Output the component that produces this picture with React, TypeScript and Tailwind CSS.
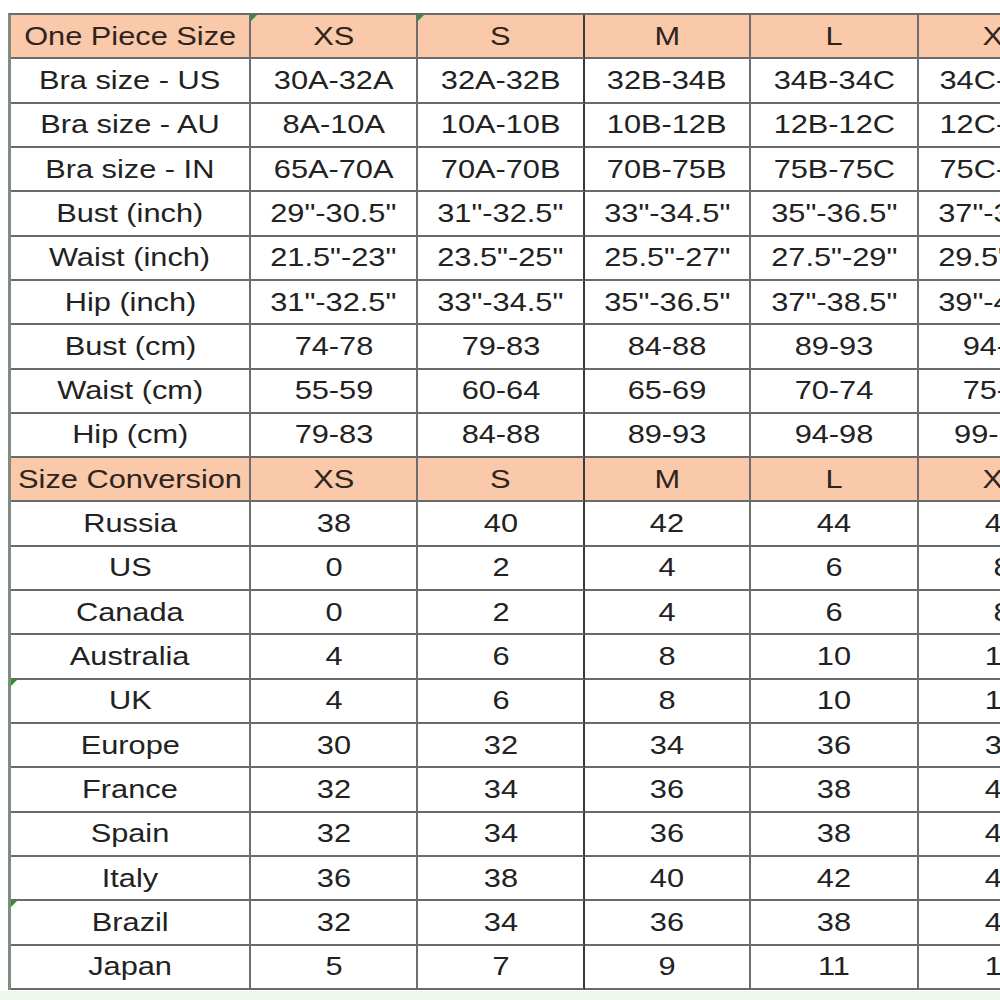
import React from "react";

const top: string[][] = [
  ["One Piece Size", "XS", "S", "M", "L", "XL"],
  ["Bra size - US", "30A-32A", "32A-32B", "32B-34B", "34B-34C", "34C-36C"],
  ["Bra size - AU", "8A-10A", "10A-10B", "10B-12B", "12B-12C", "12C-14C"],
  ["Bra size - IN", "65A-70A", "70A-70B", "70B-75B", "75B-75C", "75C-80C"],
  ["Bust (inch)", "29\"-30.5\"", "31\"-32.5\"", "33\"-34.5\"", "35\"-36.5\"", "37\"-38.5\""],
  ["Waist (inch)", "21.5\"-23\"", "23.5\"-25\"", "25.5\"-27\"", "27.5\"-29\"", "29.5\"-31\""],
  ["Hip (inch)", "31\"-32.5\"", "33\"-34.5\"", "35\"-36.5\"", "37\"-38.5\"", "39\"-40.5\""],
  ["Bust (cm)", "74-78", "79-83", "84-88", "89-93", "94-98"],
  ["Waist (cm)", "55-59", "60-64", "65-69", "70-74", "75-79"],
  ["Hip (cm)", "79-83", "84-88", "89-93", "94-98", "99-103"],
  ["Size Conversion", "XS", "S", "M", "L", "XL"],
  ["Russia", "38", "40", "42", "44", "46"],
  ["US", "0", "2", "4", "6", "8"],
  ["Canada", "0", "2", "4", "6", "8"],
  ["Australia", "4", "6", "8", "10", "12"],
  ["UK", "4", "6", "8", "10", "12"],
  ["Europe", "30", "32", "34", "36", "38"],
  ["France", "32", "34", "36", "38", "40"],
  ["Spain", "32", "34", "36", "38", "40"],
  ["Italy", "36", "38", "40", "42", "44"],
  ["Brazil", "32", "34", "36", "38", "40"],
  ["Japan", "5", "7", "9", "11", "13"],
];

const headerRows = new Set([0, 10]);
// Excel-style green error markers: [row, col]
const markers = new Set(["0-1", "0-2", "15-0", "20-0"]);

export default function App() {
  return (
    <div
      className="w-[1000px] h-[1000px] overflow-hidden bg-white flex flex-col"
      style={{ fontFamily: "'Liberation Sans', Arial, sans-serif" }}
    >
      <div className="flex pt-[13px] pl-[8px]">
        <div className="w-[3px] bg-[#d6e6d6]" />
        <div className="grid shrink-0 grid-cols-[240px_167px_167px_166px_168px_167px] auto-rows-[44.32px] border-t-2 border-l-[3px] border-t-[#6a6a6a] border-l-[#7e8e7e]">
          {top.map((row, ri) =>
            row.map((cell, ci) => (
              <div
                key={ri + "-" + ci}
                className={
                  "relative flex items-center justify-center border-b-2 border-r-2 whitespace-nowrap " +
                  (headerRows.has(ri) ? "bg-[#f9c9aa] " : "bg-white ") +
                  (ci === 2 ? "border-r-[#3a3a3a] " : "border-r-[#6e6e6e] ") +
                  "border-b-[#6a6a6a]"
                }
              >
                {markers.has(ri + "-" + ci) && (
                  <svg
                    width="6"
                    height="6"
                    viewBox="0 0 6 6"
                    className="absolute left-0 top-0"
                  >
                    <polygon points="0,0 6,0 0,6" fill="#1f9a2a" />
                  </svg>
                )}
                <span
                  className={
                    "inline-block scale-x-[1.23] text-[25px] leading-none " +
                    (headerRows.has(ri) ? "text-[#2e2420]" : "text-[#222222]")
                  }
                >
                  {cell}
                </span>
              </div>
            ))
          )}
        </div>
      </div>
      <div className="flex-1 mt-[1px] bg-[#eef6ee]" />
    </div>
  );
}
